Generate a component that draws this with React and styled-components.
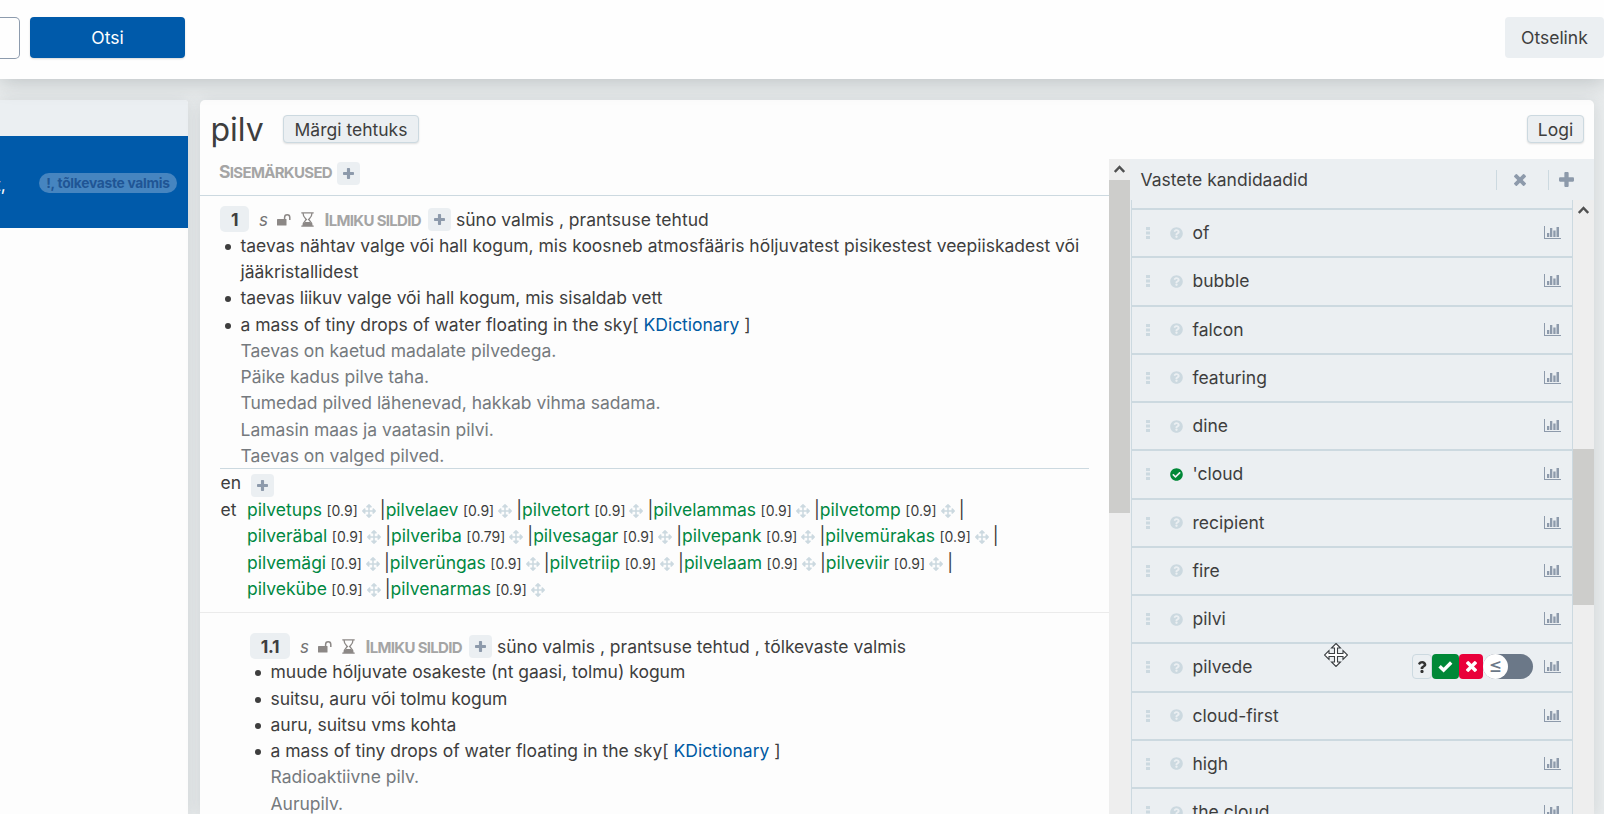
import React from 'react';
import styled, { createGlobalStyle } from 'styled-components';
import { FaArrowsAlt, FaQuestionCircle, FaCheckCircle, FaQuestion } from 'react-icons/fa';

const Global = createGlobalStyle`
  *{box-sizing:border-box}
  body{margin:0;overflow:hidden;font-family:Inter,"Liberation Sans",sans-serif;font-size:17.5px;line-height:26.25px;color:#3e3e3e;background:#e9eced}
  svg{display:block;flex:none}
`;

const Page = styled.div`height:814px;display:flex;flex-direction:column;overflow:hidden;`;
const Header = styled.header`
  height:79px;flex:none;background:#fefefe;display:flex;align-items:flex-start;padding-top:17px;position:relative;z-index:2;
  box-shadow:0 4px 20px rgba(60,70,75,.24);
`;
const SearchBox = styled.div`width:20px;height:42px;border:1px solid #8d9bad;border-left:0;border-radius:0 5px 5px 0;`;
const SearchButton = styled.button`
  width:155px;height:41px;margin-left:10px;border:0;border-radius:4px;background:#005aaa;color:#fff;font:inherit;padding:2px 0 0;
  box-shadow:0 1px 2px rgba(0,0,0,.15);
`;
const DirectLink = styled.button`
  width:99px;height:41px;margin:0 0 0 auto;border:0;border-radius:4px;background:#ebeff2;color:inherit;font:inherit;
  text-align:left;padding:2px 0 0 16px;white-space:nowrap;
`;
const Body = styled.main`flex:1;min-height:0;display:flex;gap:12px;padding:21px 10px 0 0;`;
const card = `background:#fdfdfd;box-shadow:0 2px 16px rgba(60,70,75,.14);overflow:hidden;`;
const Results = styled.aside`${card}width:188px;border-radius:0 4px 0 0;flex:none;`;
const ResultsHead = styled.div`height:36px;background:#ebeff2;`;
const ResultRow = styled.div`
  height:92px;background:#005aaa;color:#fff;display:flex;align-items:center;justify-content:space-between;padding:2px 11px 0 0;
`;
const Snippet = styled.span`margin-left:-5px;padding-top:5px;`;
const Tag = styled.span`
  height:20px;border-radius:10px;background:#4685c0;color:#1f5595;font-weight:700;font-size:13.8px;line-height:20px;
  width:138px;text-align:center;white-space:nowrap;letter-spacing:-.28px;
`;
const Entry = styled.section`${card}flex:1;border-radius:5px 5px 0 0;display:flex;flex-direction:column;`;
const EntryHead = styled.div`height:59px;flex:none;display:flex;align-items:center;padding:0 10px 2px 10.5px;`;
const Headword = styled.h1`margin:2px 19.5px 0 0;width:53px;font-weight:400;font-size:32px;line-height:40px;`;
const SmallButton = styled.button`
  width:${p => p.$w}px;height:28px;border:1px solid #ccd9e0;border-radius:4px;background:#ebeff2;color:inherit;font:inherit;
  line-height:24px;padding:2px 0 0;box-shadow:0 1px 2px rgba(0,0,0,.12);white-space:nowrap;
  &:last-child{margin-left:auto}
`;
const Columns = styled.div`flex:1;min-height:0;display:flex;`;
const Article = styled.div`width:909px;overflow:hidden;flex:none;`;
const Notes = styled.div`
  height:37px;border-bottom:1px solid #ccd9e0;padding:3px 0 0 19px;display:flex;align-items:flex-start;
`;
const Caps = styled.span`
  display:block;width:${p => p.$w}px;text-transform:uppercase;font-size:15px;font-weight:700;color:#a5a5a5;letter-spacing:-.68px;white-space:nowrap;
  line-height:20px;height:23px;
  &::first-letter{font-size:17.5px}
`;
const AddBox = styled.span`
  width:22.5px;height:23px;border-radius:4px;background:#ebeff2;color:#8d9aab;display:flex;align-items:center;justify-content:center;flex:none;
`;
const Lexeme = styled.div`padding-left:${p => p.$indent}px;`;
const LexemeHead = styled.div`
  display:flex;align-items:center;height:${p => p.$h}px;padding-top:${p => p.$top}px;
  ${Caps}{line-height:23px}
`;
const Badge = styled.span`
  width:${p => p.$w}px;height:26px;line-height:27px;text-align:center;background:#ebeff2;border-radius:5px;font-weight:700;
  margin-right:10px;letter-spacing:-.3px;
`;
const Pos = styled.i`width:18px;color:#757575;font-size:17px;padding-top:1px;`;
const Icon = styled.span`width:${p => p.$w}px;display:flex;padding-top:1px;`;
const Tags = styled.span`margin-left:5.5px;padding-top:1px;white-space:nowrap;`;
const Defs = styled.ul`list-style:none;margin:0;padding:0 0 0 20.5px;letter-spacing:-.01px;`;
const Def = styled.li`
  white-space:pre-line;display:flex;
  &::before{content:"";width:6px;height:6px;border-radius:50%;background:#3e3e3e;margin:11px 10px 0 -16px;flex:none}
`;
const Usage = styled.div`color:#757a7e;padding-left:20.5px;letter-spacing:-.02px;`;
const Link = styled.a`color:#005aa3;`;
const Rule = styled.hr`margin:-1px 20px 0 0;border:0;border-top:1px solid #ccd9e0;`;
const EmptyLang = styled.div`display:flex;height:28px;padding-top:1px;${AddBox}{margin-top:4px}`;
const Lang = styled.div`display:flex;`;
const LangCode = styled.span`width:${p => p.$w}px;flex:none;padding-left:.5px;`;
const MatchLine = styled.div`display:flex;height:26.25px;align-items:center;white-space:nowrap;`;
const Word = styled.span`color:#008842;`;
const Score = styled.span`font-size:14px;margin:2px 4px 0 4.5px;`;
const Move = styled(FaArrowsAlt)`color:#ccd9e0;margin:2px 4px 0 0;`;
const Divider = styled.hr`margin:10px 0 0;border:0;border-top:1px solid #ebebeb;`;

const Track = styled.div`width:21px;background:#eee;flex:none;display:flex;flex-direction:column;`;
const Arrow = styled.div`height:21px;display:flex;align-items:center;justify-content:center;padding-bottom:2px;`;
const Thumb = styled.div`margin-top:${p => p.$gap}px;height:${p => p.$h}px;background:#cdcdcb;`;

const Candidates = styled.div`flex:1;background:#ebeff2;display:flex;flex-direction:column;min-width:0;`;
const CandHead = styled.div`height:41px;flex:none;display:flex;align-items:center;padding-left:10.5px;`;
const CandTitle = styled.span`flex:1;padding-top:1px;`;
const HeadAction = styled.span`
  width:${p => p.$w}px;height:20px;border-left:1px solid #ccd9e0;color:#8d9aab;display:flex;align-items:center;padding-left:${p => p.$pl}px;
`;
const CandBody = styled.div`flex:1;min-height:0;display:flex;padding-left:1px;`;
const List = styled.div`width:442px;border:solid #ccd9e0;border-width:0 1px;padding-top:8px;overflow:hidden;`;
const Row = styled.div`
  height:48.25px;border-top:2px solid #ccd9e0;display:flex;align-items:center;padding:0 11px 0 14px;
`;
const Status = styled.span`width:22.5px;margin-left:20px;color:${p => (p.$ok ? '#008837' : '#ccd9e0')};`;
const RowText = styled.span`flex:1;white-space:nowrap;`;
const Controls = styled.span`display:flex;height:25px;margin-right:11px;position:relative;top:-.5px;`;
const Mark = styled.span`
  width:${p => p.$w}px;height:25px;border-radius:4px;background:${p => p.$bg};color:${p => p.$fg};
  border:${p => (p.$line ? '1px solid #ccd9e0' : '0')};display:flex;align-items:center;justify-content:center;
`;
const Toggle = styled.span`width:50px;border-radius:13px;background:#6b7888;display:flex;`;
const Knob = styled.span`
  width:25px;height:25px;border-radius:50%;background:#fff;color:#6b7888;text-align:center;line-height:24px;font-size:21px;
`;
const Cursor = styled.svg`position:absolute;left:-88.5px;top:-11px;`;

const PlusIcon = ({ size }) => (
  <svg width={size} height={size} viewBox="0 0 14 14" fill="currentColor">
    <rect x="5" y="0" width="4" height="14" rx="1" /><rect x="0" y="5" width="14" height="4" rx="1" />
  </svg>
);
const CrossIcon = ({ size }) => (
  <svg width={size} height={size} viewBox="0 0 14 14" fill="currentColor">
    <g transform="rotate(45 7 7)"><rect x="4.8" y="-1.2" width="4.4" height="16.4" rx="1" /><rect x="-1.2" y="4.8" width="16.4" height="4.4" rx="1" /></g>
  </svg>
);
const CheckIcon = () => (
  <svg width="15" height="13" viewBox="0 0 15 13"><path d="M1.6 6.2l4 4 7.600-7.700" fill="none" stroke="currentColor" strokeWidth="3.4" /></svg>
);
const Plus = () => <AddBox><PlusIcon size={11} /></AddBox>;
const Lock = () => (
  <svg width="14" height="12" viewBox="0 0 14 12"><rect x="0" y="5" width="9.5" height="6.5" rx=".6" fill="#8c8886" />
    <path d="M7.6 5.5V3.4a2.6 2.6 0 0 1 5.2 0V6" fill="none" stroke="#8c8886" strokeWidth="1.5" /></svg>
);
const Hourglass = () => (
  <svg width="13" height="15" viewBox="0 0 13 15"><path d="M.3 .8h12.4M.3 14.2h12.4M2 1c0 4 2 5 3.4 6.5C4 9 2 10 2 14M11 1c0 4-2 5-3.4 6.5C9 9 11 10 11 14" fill="none" stroke="#8c8886" strokeWidth="1.3" />
    <path d="M2.2 14c0-2 .6-3.2 2-4h4.6c1.4 .8 2 2 2 4z" fill="#8c8886" /></svg>
);
const Chart = () => (
  <svg width="17" height="14" viewBox="0 0 17 14" fill="#8d9aab"><path d="M0 0h1v12h16v1H0zM3 7h2.3v4H3zM6 2h2.3v9H6zM9.300 4.500h2.300v6.500H9.300zM12.500 1h2.500v10h-2.500z" /></svg>
);
const Dots = () => (
  <svg width="4" height="12" viewBox="0 0 4 12" fill="#ccd9e0"><path d="M0 0h4v3H0zM0 4.500h4v3H0zM0 9h4v3H0z" /></svg>
);
const Chevron = () => (
  <Arrow><svg width="11" height="8" viewBox="0 0 11 8"><path d="M.8 7l4.700-5 4.700 5" fill="none" stroke="#505050" strokeWidth="2.4" /></svg></Arrow>
);

const Meta = ({ num, w, h, top = 0, tags }) => (
  <LexemeHead $h={h} $top={top}>
    <Badge $w={w}>{num}</Badge><Pos>s</Pos>
    <Icon $w={24}><Lock /></Icon><Icon $w={23.5}><Hourglass /></Icon>
    <Caps $w={103.5}>Ilmiku sildid</Caps><Plus /><Tags>{tags}</Tags>
  </LexemeHead>
);

const MATCHES = [
  [['pilvetups', '0.9'], ['pilvelaev', '0.9'], ['pilvetort', '0.9'], ['pilvelammas', '0.9'], ['pilvetomp', '0.9']],
  [['pilveräbal', '0.9'], ['pilveriba', '0.79'], ['pilvesagar', '0.9'], ['pilvepank', '0.9'], ['pilvemürakas', '0.9']],
  [['pilvemägi', '0.9'], ['pilverüngas', '0.9'], ['pilvetriip', '0.9'], ['pilvelaam', '0.9'], ['pilveviir', '0.9']],
  [['pilvekübe', '0.9'], ['pilvenarmas', '0.9']],
];
const WORDS = ['of', 'bubble', 'falcon', 'featuring', 'dine', "'cloud", 'recipient', 'fire', 'pilvi', 'pilvede', 'cloud-first', 'high', 'the cloud'];

const RowControls = () => (
  <Controls>
    <Cursor width="24" height="24" viewBox="-12 -12 24 24">
      <path d="M0-11.500L4.500-7H1.500V-1.500H7V-4.500L11.500 0 7 4.500V1.500H1.500V7H4.500L0 11.500-4.500 7H-1.500V1.500H-7V4.500L-11.500 0-7-4.500V-1.500H-1.500V-7H-4.500z" fill="#fff" stroke="#3b3f42" strokeWidth="1.1" />
    </Cursor>
    <Mark $w={20} $bg="#ebeff2" $fg="#333" $line><FaQuestion size={12} /></Mark>
    <Mark $w={27} $bg="#008837" $fg="#fff"><CheckIcon /></Mark>
    <Mark $w={24} $bg="#e9003a" $fg="#fff"><CrossIcon size={11} /></Mark>
    <Toggle><Knob>≤</Knob></Toggle>
  </Controls>
);

export default function App() {
  return (
    <Page>
      <Global />
      <Header>
        <SearchBox /><SearchButton>Otsi</SearchButton><DirectLink>Otselink</DirectLink>
      </Header>
      <Body>
        <Results>
          <ResultsHead />
          <ResultRow><Snippet>t,</Snippet><Tag>!, tõlkevaste valmis</Tag></ResultRow>
        </Results>
        <Entry>
          <EntryHead>
            <Headword>pilv</Headword><SmallButton $w={136}>Märgi tehtuks</SmallButton>
            <SmallButton $w={57}>Logi</SmallButton>
          </EntryHead>
          <Columns>
            <Article>
              <Notes><Caps $w={118}>Sisemärkused</Caps><Plus /></Notes>
              <Lexeme $indent={20}>
                <Meta num="1" w={29} h={36.75} top={10} tags="süno valmis , prantsuse tehtud" />
                <Defs>
                  <Def>{'taevas nähtav valge või hall kogum, mis koosneb atmosfääris hõljuvatest pisikestest veepiiskadest või\njääkristallidest'}</Def>
                  <Def>taevas liikuv valge või hall kogum, mis sisaldab vett</Def>
                  <Def><span>a mass of tiny drops of water floating in the sky[ <Link>KDictionary</Link> ]</span></Def>
                </Defs>
                <Usage>Taevas on kaetud madalate pilvedega.</Usage>
                <Usage>Päike kadus pilve taha.</Usage>
                <Usage>Tumedad pilved lähenevad, hakkab vihma sadama.</Usage>
                <Usage>Lamasin maas ja vaatasin pilvi.</Usage>
                <Usage>Taevas on valged pilved.</Usage>
                <Rule />
                <EmptyLang><LangCode $w={31}>en</LangCode><Plus /></EmptyLang>
                <Lang>
                  <LangCode $w={27}>et</LangCode>
                  <div>
                    {MATCHES.map((line, i) => (
                      <MatchLine key={i}>
                        {line.map(([w, s], j) => (
                          <React.Fragment key={w}>
                            <Word>{w}</Word><Score>[{s}]</Score><Move size={14} />
                            {!(i === 3 && j === 1) && <span>|</span>}
                          </React.Fragment>
                        ))}
                      </MatchLine>
                    ))}
                  </div>
                </Lang>
              </Lexeme>
              <Divider />
              <Lexeme $indent={50}>
                <Meta num="1.1" w={40} h={46.25} top={20} tags="süno valmis , prantsuse tehtud , tõlkevaste valmis" />
                <Defs>
                  <Def>muude hõljuvate osakeste (nt gaasi, tolmu) kogum</Def>
                  <Def>suitsu, auru või tolmu kogum</Def>
                  <Def>auru, suitsu vms kohta</Def>
                  <Def><span>a mass of tiny drops of water floating in the sky[ <Link>KDictionary</Link> ]</span></Def>
                </Defs>
                <Usage>Radioaktiivne pilv.</Usage>
                <Usage>Aurupilv.</Usage>
              </Lexeme>
            </Article>
            <Track><Chevron /><Thumb $gap={0} $h={333} /></Track>
            <Candidates>
              <CandHead>
                <CandTitle>Vastete kandidaadid</CandTitle>
                <HeadAction $w={52} $pl={17}><CrossIcon size={12} /></HeadAction>
                <HeadAction $w={46} $pl={10}><PlusIcon size={15} /></HeadAction>
              </CandHead>
              <CandBody>
                <List>
                  {WORDS.map(w => (
                    <Row key={w}>
                      <Dots />
                      <Status $ok={w === "'cloud"}>{w === "'cloud" ? <FaCheckCircle size={13} /> : <FaQuestionCircle size={13} />}</Status>
                      <RowText>{w}</RowText>
                      {w === 'pilvede' && <RowControls />}
                      <Chart />
                    </Row>
                  ))}
                </List>
                <Track><Chevron /><Thumb $gap={228} $h={156} /></Track>
              </CandBody>
            </Candidates>
          </Columns>
        </Entry>
      </Body>
    </Page>
  );
}
